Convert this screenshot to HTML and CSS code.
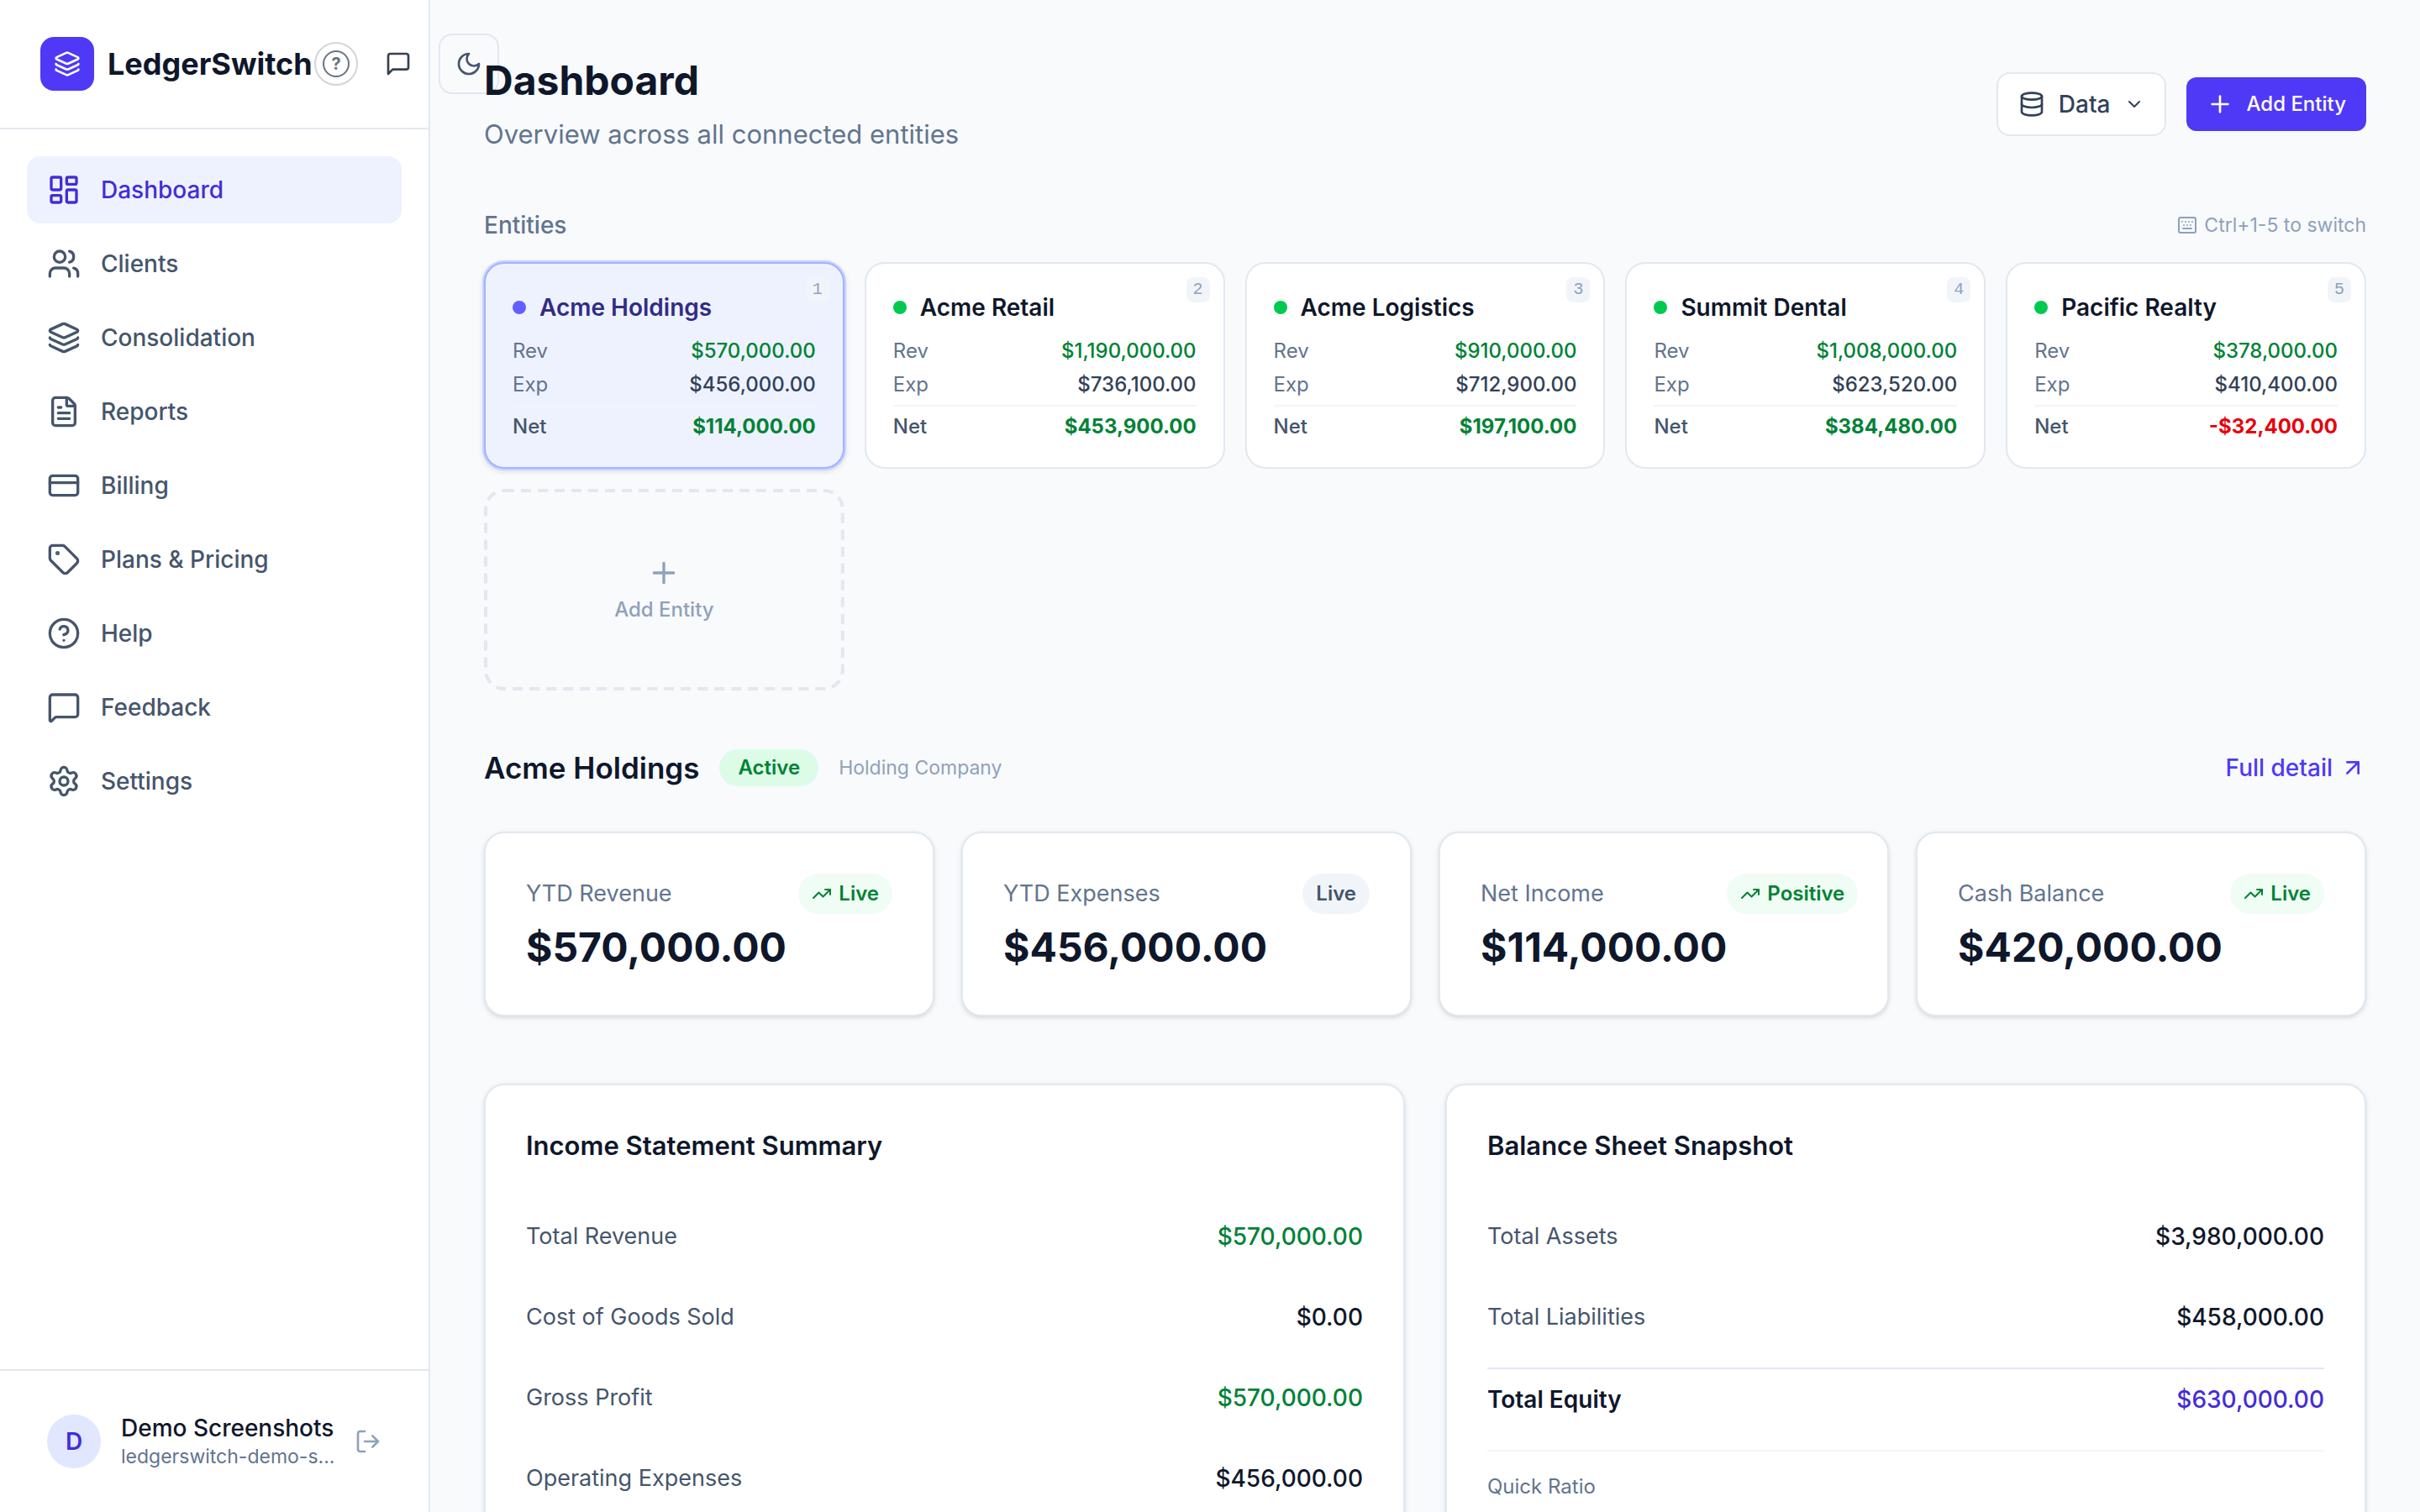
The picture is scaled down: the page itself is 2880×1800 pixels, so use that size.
FILE: index.html
```html
<!DOCTYPE html>
<html lang="en">
<head>
  <meta charset="UTF-8">
  <meta name="viewport" content="width=device-width, initial-scale=1">
  <title>LedgerSwitch - Dashboard</title>
  <link rel="stylesheet" href="styles.css">
</head>
<body>

<!-- icon sprite -->
<svg class="sprite" aria-hidden="true">
  <symbol id="i-layers" viewBox="0 0 24 24"><path d="M12.83 2.18a2 2 0 0 0-1.66 0L2.6 6.08a1 1 0 0 0 0 1.83l8.58 3.91a2 2 0 0 0 1.66 0l8.58-3.9a1 1 0 0 0 0-1.83z"/><path d="M2 12a1 1 0 0 0 .58.91l8.6 3.91a2 2 0 0 0 1.65 0l8.58-3.9A1 1 0 0 0 22 12"/><path d="M2 17a1 1 0 0 0 .58.91l8.6 3.91a2 2 0 0 0 1.65 0l8.58-3.9A1 1 0 0 0 22 17"/></symbol>
  <symbol id="i-dashboard" viewBox="0 0 24 24"><rect x="3" y="3" width="7" height="9" rx="1"/><rect x="14" y="3" width="7" height="5" rx="1"/><rect x="14" y="12" width="7" height="9" rx="1"/><rect x="3" y="16" width="7" height="5" rx="1"/></symbol>
  <symbol id="i-users" viewBox="0 0 24 24"><path d="M16 21v-2a4 4 0 0 0-4-4H6a4 4 0 0 0-4 4v2"/><path d="M16 3.13a4 4 0 0 1 0 7.75"/><path d="M22 21v-2a4 4 0 0 0-3-3.87"/><circle cx="9" cy="7" r="4"/></symbol>
  <symbol id="i-file" viewBox="0 0 24 24"><path d="M6 22a2 2 0 0 1-2-2V4a2 2 0 0 1 2-2h8a2.4 2.4 0 0 1 1.7.7l3.6 3.6a2.4 2.4 0 0 1 .7 1.7v12a2 2 0 0 1-2 2z"/><path d="M14 2v5a1 1 0 0 0 1 1h5M10 9H8M16 13H8M16 17H8"/></symbol>
  <symbol id="i-card" viewBox="0 0 24 24"><rect x="2" y="5" width="20" height="14" rx="2"/><path d="M2 10h20"/></symbol>
  <symbol id="i-tag" viewBox="0 0 24 24"><path d="M12.59 2.59A2 2 0 0 0 11.17 2H4a2 2 0 0 0-2 2v7.17a2 2 0 0 0 .59 1.42l8.7 8.7a2.43 2.43 0 0 0 3.42 0l6.58-6.58a2.43 2.43 0 0 0 0-3.42z"/><circle cx="7.5" cy="7.5" r=".5" fill="currentColor"/></symbol>
  <symbol id="i-help" viewBox="0 0 24 24"><circle cx="12" cy="12" r="10"/><path d="M9.09 9a3 3 0 0 1 5.83 1c0 2-3 3-3 3M12 17h.01"/></symbol>
  <symbol id="i-message" viewBox="0 0 24 24"><path d="M22 17a2 2 0 0 1-2 2H6.83a2 2 0 0 0-1.42.59l-2.2 2.2A.71.71 0 0 1 2 21.29V5a2 2 0 0 1 2-2h16a2 2 0 0 1 2 2z"/></symbol>
  <symbol id="i-chat" viewBox="0 0 24 24"><path d="M21 15a2 2 0 0 1-2 2H7l-4 4V5a2 2 0 0 1 2-2h14a2 2 0 0 1 2 2z"/></symbol>
  <symbol id="i-settings" viewBox="0 0 24 24"><path d="M9.67 4.14a2.34 2.34 0 0 1 4.66 0 2.34 2.34 0 0 0 3.32 1.91 2.34 2.34 0 0 1 2.33 4.03 2.34 2.34 0 0 0 0 3.84 2.34 2.34 0 0 1-2.33 4.03 2.34 2.34 0 0 0-3.32 1.91 2.34 2.34 0 0 1-4.66 0 2.34 2.34 0 0 0-3.32-1.91 2.34 2.34 0 0 1-2.33-4.03 2.34 2.34 0 0 0 0-3.84 2.34 2.34 0 0 1 2.33-4.03 2.34 2.34 0 0 0 3.32-1.91"/><circle cx="12" cy="12" r="3"/></symbol>
  <symbol id="i-moon" viewBox="0 0 24 24"><path d="M12 3a6 6 0 0 0 9 9 9 9 0 1 1-9-9z"/></symbol>
  <symbol id="i-logout" viewBox="0 0 24 24"><path d="M9 21H5a2 2 0 0 1-2-2V5a2 2 0 0 1 2-2h4M16 17l5-5-5-5M21 12H9"/></symbol>
  <symbol id="i-database" viewBox="0 0 24 24"><ellipse cx="12" cy="5" rx="9" ry="3"/><path d="M3 5v14a9 3 0 0 0 18 0V5"/><path d="M3 12a9 3 0 0 0 18 0"/></symbol>
  <symbol id="i-chevron" viewBox="0 0 24 24"><path d="m6 9 6 6 6-6"/></symbol>
  <symbol id="i-plus" viewBox="0 0 24 24"><path d="M5 12h14M12 5v14"/></symbol>
  <symbol id="i-keyboard" viewBox="0 0 24 24"><rect x="2" y="3" width="20" height="18" rx="2"/><path d="M6 8h.01M10 8h.01M14 8h.01M18 8h.01M8 12h.01M12 12h.01M16 12h.01M7 16h10"/></symbol>
  <symbol id="i-arrow" viewBox="0 0 24 24"><path d="M7 7h10v10M7 17 17 7"/></symbol>
  <symbol id="i-trend" viewBox="0 0 24 24"><path d="M16 7h6v6"/><path d="m22 7-8.5 8.5-5-5L2 17"/></symbol>
</svg>

<div class="app">
  <aside class="sidebar">
    <div class="sidebar-top">
      <div class="brand">
        <span class="logo"><svg class="icon"><use href="#i-layers"/></svg></span>
        <span>LedgerSwitch</span>
      </div>
      <div class="top-actions">
        <button class="help-btn" type="button" aria-label="Help"><span>?</span></button>
        <button class="top-btn" type="button" aria-label="Feedback"><svg class="icon"><use href="#i-chat"/></svg></button>
        <button class="top-btn theme-btn" type="button" aria-label="Dark mode"><svg class="icon"><use href="#i-moon"/></svg></button>
      </div>
    </div>

    <nav class="nav">
      <a href="#" class="active"><svg class="icon"><use href="#i-dashboard"/></svg>Dashboard</a>
      <a href="#"><svg class="icon"><use href="#i-users"/></svg>Clients</a>
      <a href="#"><svg class="icon"><use href="#i-layers"/></svg>Consolidation</a>
      <a href="#"><svg class="icon"><use href="#i-file"/></svg>Reports</a>
      <a href="#"><svg class="icon"><use href="#i-card"/></svg>Billing</a>
      <a href="#"><svg class="icon"><use href="#i-tag"/></svg>Plans &amp; Pricing</a>
      <a href="#"><svg class="icon"><use href="#i-help"/></svg>Help</a>
      <a href="#"><svg class="icon"><use href="#i-message"/></svg>Feedback</a>
      <a href="#"><svg class="icon"><use href="#i-settings"/></svg>Settings</a>
    </nav>

    <div class="user">
      <span class="avatar">D</span>
      <div class="user-info">
        <div class="user-name">Demo Screenshots</div>
        <div class="user-email">ledgerswitch-demo-s...</div>
      </div>
      <button class="logout" type="button" aria-label="Sign out"><svg class="icon"><use href="#i-logout"/></svg></button>
    </div>
  </aside>

  <main class="main">
    <header class="page-header">
      <div>
        <h1>Dashboard</h1>
        <p>Overview across all connected entities</p>
      </div>
      <div class="actions">
        <button class="data-btn" type="button"><svg class="icon"><use href="#i-database"/></svg>Data<svg class="icon chevron"><use href="#i-chevron"/></svg></button>
        <button class="add-btn" type="button"><svg class="icon"><use href="#i-plus"/></svg>Add Entity</button>
      </div>
    </header>

    <div class="entities-head">
      <h2>Entities</h2>
      <span class="hint"><svg class="icon"><use href="#i-keyboard"/></svg>Ctrl+1-5 to switch</span>
    </div>

    <div class="entities">
      <button class="entity selected" type="button">
        <kbd>1</kbd>
        <span class="entity-name"><i class="dot"></i>Acme Holdings</span>
        <span class="line"><span>Rev</span><b class="green">$570,000.00</b></span>
        <span class="line"><span>Exp</span><b>$456,000.00</b></span>
        <span class="line net"><span>Net</span><b class="green">$114,000.00</b></span>
      </button>
      <button class="entity" type="button">
        <kbd>2</kbd>
        <span class="entity-name"><i class="dot"></i>Acme Retail</span>
        <span class="line"><span>Rev</span><b class="green">$1,190,000.00</b></span>
        <span class="line"><span>Exp</span><b>$736,100.00</b></span>
        <span class="line net"><span>Net</span><b class="green">$453,900.00</b></span>
      </button>
      <button class="entity" type="button">
        <kbd>3</kbd>
        <span class="entity-name"><i class="dot"></i>Acme Logistics</span>
        <span class="line"><span>Rev</span><b class="green">$910,000.00</b></span>
        <span class="line"><span>Exp</span><b>$712,900.00</b></span>
        <span class="line net"><span>Net</span><b class="green">$197,100.00</b></span>
      </button>
      <button class="entity" type="button">
        <kbd>4</kbd>
        <span class="entity-name"><i class="dot"></i>Summit Dental</span>
        <span class="line"><span>Rev</span><b class="green">$1,008,000.00</b></span>
        <span class="line"><span>Exp</span><b>$623,520.00</b></span>
        <span class="line net"><span>Net</span><b class="green">$384,480.00</b></span>
      </button>
      <button class="entity" type="button">
        <kbd>5</kbd>
        <span class="entity-name"><i class="dot"></i>Pacific Realty</span>
        <span class="line"><span>Rev</span><b class="green">$378,000.00</b></span>
        <span class="line"><span>Exp</span><b>$410,400.00</b></span>
        <span class="line net"><span>Net</span><b class="red">-$32,400.00</b></span>
      </button>
      <button class="entity-add" type="button">
        <svg class="dashes" aria-hidden="true"><rect x="2" y="2" rx="22"/></svg>
        <svg class="icon"><use href="#i-plus"/></svg>
        Add Entity
      </button>
    </div>

    <div class="detail-head">
      <h2>Acme Holdings</h2>
      <span class="status">Active</span>
      <span class="kind">Holding Company</span>
      <a href="#" class="detail-link">Full detail<svg class="icon"><use href="#i-arrow"/></svg></a>
    </div>

    <section class="stats">
      <div class="stat">
        <div>
          <div class="stat-label">YTD Revenue</div>
          <div class="stat-value">$570,000.00</div>
        </div>
        <span class="pill up"><svg class="icon"><use href="#i-trend"/></svg>Live</span>
      </div>
      <div class="stat">
        <div>
          <div class="stat-label">YTD Expenses</div>
          <div class="stat-value">$456,000.00</div>
        </div>
        <span class="pill">Live</span>
      </div>
      <div class="stat">
        <div>
          <div class="stat-label">Net Income</div>
          <div class="stat-value">$114,000.00</div>
        </div>
        <span class="pill up"><svg class="icon"><use href="#i-trend"/></svg>Positive</span>
      </div>
      <div class="stat">
        <div>
          <div class="stat-label">Cash Balance</div>
          <div class="stat-value">$420,000.00</div>
        </div>
        <span class="pill up"><svg class="icon"><use href="#i-trend"/></svg>Live</span>
      </div>
    </section>

    <section class="panels">
      <div class="panel">
        <h3>Income Statement Summary</h3>
        <dl>
          <div class="row"><dt>Total Revenue</dt><dd class="green">$570,000.00</dd></div>
          <div class="row"><dt>Cost of Goods Sold</dt><dd>$0.00</dd></div>
          <div class="row"><dt>Gross Profit</dt><dd class="green">$570,000.00</dd></div>
          <div class="row"><dt>Operating Expenses</dt><dd>$456,000.00</dd></div>
        </dl>
      </div>
      <div class="panel">
        <h3>Balance Sheet Snapshot</h3>
        <dl>
          <div class="row"><dt>Total Assets</dt><dd>$3,980,000.00</dd></div>
          <div class="row"><dt>Total Liabilities</dt><dd>$458,000.00</dd></div>
          <div class="row total"><dt>Total Equity</dt><dd>$630,000.00</dd></div>
        </dl>
        <div class="ratios">Quick Ratio</div>
      </div>
    </section>
  </main>
</div>

</body>
</html>
```

FILE: styles.css
```css
* {
  box-sizing: border-box;
}
body {
  margin: 0;
  font-family: Inter, "Liberation Sans", sans-serif;
  font-size: 28px;
  line-height: 40px;
  color: #0f172b;
  background: #f8fafc;
}
h1, h2, h3, p, dl, dd {
  margin: 0;
}
button {
  font: inherit;
  color: inherit;
  background: none;
  border: none;
  padding: 0;
  cursor: pointer;
}
a {
  text-decoration: none;
}
.sprite {
  display: none;
}
.icon {
  width: 32px;
  height: 32px;
  flex-shrink: 0;
  fill: none;
  stroke: currentColor;
  stroke-width: 2;
  stroke-linecap: round;
  stroke-linejoin: round;
}
.green {
  color: #008236;
}
.red {
  color: #e7000b;
}

.app {
  display: flex;
  height: 100vh;
  overflow: hidden;
}

/* sidebar */
.sidebar {
  display: flex;
  flex-direction: column;
  flex: 0 0 512px;
  width: 512px;
  background: #fff;
  border-right: 2px solid #e2e8f0;
}
.sidebar-top {
  display: flex;
  align-items: center;
  padding: 40px 48px;
  border-bottom: 2px solid #e2e8f0;
}
.brand {
  display: flex;
  align-items: center;
  flex: 0 0 326px;
  gap: 16px;
  font-size: 36px;
  font-weight: 700;
}
.logo {
  display: flex;
  align-items: center;
  justify-content: center;
  width: 64px;
  height: 64px;
  border-radius: 16px;
  background: #4f39f6;
  color: #fff;
}
.top-actions {
  display: flex;
  align-items: center;
  gap: 12px;
}
.help-btn {
  display: flex;
  align-items: center;
  justify-content: center;
  flex: 0 0 52px;
  height: 52px;
  border: 2px solid #d1d5dc;
  border-radius: 50%;
}
.help-btn span {
  width: 32px;
  height: 32px;
  border: 2px solid #6a7282;
  border-radius: 50%;
  color: #6a7282;
  font-size: 20px;
  font-weight: 700;
  line-height: 28px;
}
.top-btn {
  display: flex;
  align-items: center;
  justify-content: center;
  flex: 0 0 72px;
  height: 72px;
  border-radius: 16px;
  color: #364153;
}
.theme-btn {
  border: 2px solid #e2e8f0;
  color: #45556c;
}
.nav {
  display: flex;
  flex-direction: column;
  flex: 1;
  gap: 8px;
  padding: 32px;
}
.nav a {
  display: flex;
  align-items: center;
  gap: 24px;
  padding: 20px 24px;
  border-radius: 16px;
  color: #45556c;
  font-weight: 500;
}
.nav .icon {
  width: 40px;
  height: 40px;
}
.nav a.active {
  background: #eef2ff;
  color: #432dd7;
}
.user {
  display: flex;
  align-items: center;
  gap: 24px;
  padding: 50px 56px;
  border-top: 2px solid #e2e8f0;
}
.avatar {
  flex: 0 0 64px;
  border-radius: 50%;
  background: #e0e7ff;
  color: #432dd7;
  font-weight: 600;
  line-height: 64px;
  text-align: center;
}
.user-info {
  flex: 1;
  min-width: 0;
  white-space: nowrap;
}
.user-name {
  font-weight: 500;
  line-height: 36px;
}
.user-email {
  color: #62748e;
  font-size: 23px;
  line-height: 32px;
}
.logout {
  display: flex;
  color: #90a1b9;
}

/* main column */
.main {
  flex: 1;
  min-width: 0;
  padding: 64px;
  overflow-y: auto;
  scrollbar-width: none;
}
.page-header {
  display: flex;
  align-items: center;
  justify-content: space-between;
  margin-bottom: 64px;
}
.page-header h1 {
  font-size: 48px;
  font-weight: 700;
  line-height: 64px;
}
.page-header p {
  margin-top: 8px;
  color: #62748e;
  font-size: 31px;
  line-height: 48px;
}
.actions {
  display: flex;
  align-items: center;
  gap: 24px;
}
.data-btn {
  display: flex;
  align-items: center;
  gap: 16px;
  padding: 16px 24px;
  border: 2px solid #e2e8f0;
  border-radius: 16px;
  background: #fff;
  color: #314158;
  font-weight: 500;
}
.data-btn .chevron {
  width: 24px;
  height: 24px;
}
.add-btn {
  display: flex;
  align-items: center;
  gap: 16px;
  padding: 12px 24px;
  border-radius: 12px;
  background: #4f39f6;
  color: #fff;
  font-size: 24px;
  font-weight: 500;
}

/* entity switcher */
.entities-head {
  display: flex;
  align-items: center;
  justify-content: space-between;
  margin-bottom: 24px;
}
.entities-head h2 {
  color: #62748e;
  font-size: 28px;
  font-weight: 500;
}
.hint {
  display: flex;
  align-items: center;
  gap: 8px;
  color: #90a1b9;
  font-size: 23px;
}
.hint .icon {
  width: 24px;
  height: 24px;
}
.entities {
  display: grid;
  grid-template-columns: repeat(5, 1fr);
  gap: 24px;
  margin-bottom: 64px;
}
.entity {
  position: relative;
  display: flex;
  flex-direction: column;
  gap: 8px;
  padding: 32px;
  border: 2px solid #e2e8f0;
  border-radius: 24px;
  background: #fff;
}
.entity.selected {
  border-color: #a3b3ff;
  background: #eef2ff;
  box-shadow: 0 0 0 2px #c6d2ff, 0 2px 6px 2px rgba(0, 0, 0, 0.1);
}
.entity kbd {
  position: absolute;
  top: 16px;
  right: 16px;
  padding: 1px 8px;
  border-radius: 8px;
  background: #f1f5f9;
  color: #90a1b9;
  font-family: "Liberation Mono", monospace;
  font-size: 20px;
  line-height: 28px;
}
.entity-name {
  display: flex;
  align-items: center;
  gap: 16px;
  margin-bottom: 8px;
  font-weight: 600;
}
.dot {
  width: 16px;
  height: 16px;
  border-radius: 50%;
  background: #00c950;
}
.selected .entity-name {
  color: #312c85;
}
.selected .dot {
  background: #615fff;
}
.line {
  display: flex;
  justify-content: space-between;
  color: #62748e;
  font-size: 24px;
  line-height: 32px;
}
.line b {
  font-weight: 500;
}
.line b:not(.green):not(.red) {
  color: #314158;
}
.net {
  padding-top: 8px;
  border-top: 2px solid #f1f5f9;
  color: #45556c;
  font-weight: 500;
}
.net b {
  font-weight: 700;
}
.entity-add {
  position: relative;
  display: flex;
  flex-direction: column;
  align-items: center;
  justify-content: center;
  gap: 8px;
  min-height: 240px;
  color: #90a1b9;
  font-size: 24px;
  font-weight: 500;
  line-height: 32px;
}
.entity-add .icon {
  width: 40px;
  height: 40px;
}
/* svg outline, so the dashes are longer than a css dashed border */
.dashes {
  position: absolute;
  inset: 0;
  width: 100%;
  height: 100%;
}
.dashes rect {
  width: calc(100% - 4px);
  height: calc(100% - 4px);
  fill: none;
  stroke: #e2e8f0;
  stroke-width: 4;
  stroke-dasharray: 12 8;
}

/* selected entity */
.detail-head {
  display: flex;
  align-items: center;
  gap: 24px;
  margin-bottom: 48px;
}
.detail-head h2 {
  font-size: 35px;
  font-weight: 600;
  line-height: 56px;
}
.status {
  padding: 6px 22px;
  border-radius: 22px;
  background: #dcfce7;
  color: #008236;
  font-size: 24px;
  font-weight: 600;
  line-height: 32px;
}
.kind {
  color: #90a1b9;
  font-size: 23px;
}
.detail-link {
  display: flex;
  align-items: center;
  gap: 8px;
  margin-left: auto;
  color: #4f39f6;
  font-weight: 500;
}
.stats {
  display: grid;
  grid-template-columns: repeat(4, minmax(0, 1fr));
  gap: 32px;
  margin-bottom: 80px;
}
.stat, .panel {
  padding: 48px;
  border: 2px solid #e2e8f0;
  border-radius: 24px;
  background: #fff;
  box-shadow: 0 2px 6px rgba(0, 0, 0, 0.1), 0 2px 4px -2px rgba(0, 0, 0, 0.1);
}
.stat {
  display: flex;
  align-items: flex-start;
  justify-content: space-between;
}
.stat-label {
  color: #62748e;
  font-size: 27px;
  line-height: 48px;
}
.stat-value {
  margin-top: 8px;
  font-size: 48px;
  font-weight: 700;
  line-height: 64px;
}
.pill {
  display: flex;
  align-items: center;
  gap: 8px;
  padding: 8px 16px;
  border-radius: 24px;
  background: #f1f5f9;
  color: #45556c;
  font-size: 24px;
  font-weight: 600;
  line-height: 32px;
}
.pill .icon {
  width: 24px;
  height: 24px;
}
.pill.up {
  background: #f0fdf4;
  color: #008236;
}

/* statements */
.panels {
  display: grid;
  grid-template-columns: repeat(2, 1fr);
  gap: 48px;
}
.panel h3 {
  margin-bottom: 48px;
  font-size: 31px;
  font-weight: 600;
  line-height: 48px;
}
.panel dl {
  display: flex;
  flex-direction: column;
  gap: 24px;
}
.row {
  display: flex;
  justify-content: space-between;
  padding: 16px 0;
}
.row dt {
  color: #45556c;
  font-size: 27px;
}
.row dd {
  font-weight: 500;
}
.row dd.green {
  color: #008236;
}
.row.total {
  border-top: 2px solid #e2e8f0;
}
.row.total dt {
  color: #0f172b;
  font-size: 28px;
  font-weight: 600;
}
.row.total dd {
  color: #432dd7;
}
.ratios {
  margin-top: 24px;
  padding-top: 24px;
  border-top: 2px solid #f1f5f9;
  color: #62748e;
  font-size: 24px;
  line-height: 36px;
}
```
